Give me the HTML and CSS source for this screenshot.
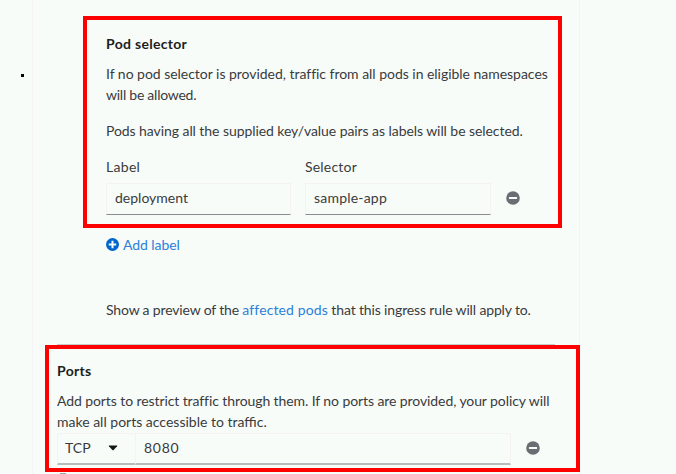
FILE: index.html
```html
<!DOCTYPE html>
<html lang="en">
<head>
<meta charset="utf-8">
<title>Ingress rule</title>
<link rel="stylesheet" href="styles.css">
</head>
<body>
<div class="page">
  <div class="gutter"><span class="bullet"></span></div>
  <main class="card">
    <section class="frame frame-pods">
      <h2><span class="wide">Pod selector</span></h2>
      <p class="intro"><span class="pod-help">If no pod selector is provided, traffic from all pods in eligible namespaces</span><br><span class="tighter">will be allowed.</span></p>
      <p class="pairs"><span class="tight">Pods having all the supplied key/value pairs as labels will be selected.</span></p>
      <div class="fields">
        <div class="field"><div class="name wide">Label</div><div class="input">deployment</div></div>
        <div class="field roomy"><div class="name">Selector</div><div class="input">sample-app</div></div>
        <svg class="minus" viewBox="0 0 14 14"><circle cx="7" cy="7" r="6.8"/><rect x="2.9" y="5.9" width="8.2" height="2.1" rx=".4"/></svg>
      </div>
    </section>
    <div class="add"><svg class="plus" viewBox="0 0 14 14"><circle cx="7" cy="7" r="7"/><path d="M5.9 3h2.2v2.9H11v2.2H8.1V11H5.9V8.1H3V5.9h2.9z"/></svg><span class="tight">Add label</span></div>
    <p class="preview"><span class="lead">Show a preview of the </span><a>affected pods</a><span class="tail"> that this ingress rule will apply to.</span></p>
    <div class="rule"></div>
    <section class="frame frame-ports">
      <h2><span class="wide">Ports</span></h2>
      <p class="port-text"><span class="port-help">Add ports to restrict traffic through them. If no ports are provided, your policy will</span><br>make all ports accessible to traffic.</p>
      <div class="port-row">
        <div class="select"><span>TCP</span><svg class="caret" viewBox="0 0 10 6"><path d="M1.2.5h7.6q.9 0 .3.8L5.6 4.9q-.6.5-1.2 0L.9 1.3Q.3.5 1.2.5z"/></svg></div>
        <div class="port">8080</div>
        <svg class="minus" viewBox="0 0 14 14"><circle cx="7" cy="7" r="6.8"/><rect x="2.9" y="5.9" width="8.2" height="2.1" rx=".4"/></svg>
      </div>
    </section>
    <div class="next"></div>
  </main>
</div>
</body>
</html>
```
FILE: styles.css
```css
* { box-sizing: border-box; }
body {
  margin: 0;
  background: #f8fcf9;
  color: #383b3d;
  font: 14px/21px Lato, "Liberation Sans", sans-serif;
}
h2, p { margin: 0; white-space: nowrap; }
h2 { font-size: 14px; line-height: 21px; font-weight: 700; color: #1c1e20; }
.wide { letter-spacing: .3px; }
.roomy { letter-spacing: .2px; }
.pod-help { letter-spacing: -.03px; }
.tight { letter-spacing: -.07px; }
.tighter { letter-spacing: -.25px; }
.page { display: flex; width: 676px; height: 474px; overflow: hidden; }
.gutter { width: 32px; padding: 74px 0 0 21px; }
.bullet { display: block; width: 3px; height: 3px; background: #000; }
.card {
  width: 548px;
  height: 474px;
  padding-top: 16px;
  border-left: 1px solid #f5f4f2;
  border-right: 1px solid #f5f4f2;
}
.frame { border: 4px solid #f00; }
.frame-pods { width: 479px; height: 212px; margin-left: 50px; padding: 13px 0 0 19px; }
.intro { margin-top: 9px; }
.pairs { margin-top: 15px; }
.fields { display: flex; gap: 14px; margin-top: 15px; }
.field { width: 185px; }
.field + .field { width: 186px; }
.input {
  height: 32px;
  margin-top: 6px;
  padding: 3px 8px;
  border: 1px solid #f4f3f1;
  border-bottom-color: #8a8d90;
}
.minus { width: 14px; height: 14px; fill: #6a6e73; }
.fields .minus { margin: 35px 0 0 1px; }
.minus rect, .plus path { fill: #f8fcf9; }
.add { display: flex; align-items: center; gap: 4px; margin: 6px 0 0 73px; color: #2b80d8; }
.plus { width: 13px; height: 13px; fill: #06c; }
.preview { margin: 44px 0 0 73px; }
.preview span { white-space: pre; }
.preview a { color: #2b80d8; letter-spacing: .12px; }
.preview .lead { letter-spacing: -.16px; }
.preview .tail { letter-spacing: -.14px; }
.rule { width: 498px; height: 1px; margin: 24px 0 0 24px; background: #c6cacb; }
.frame-ports { width: 535px; height: 127px; margin-left: 12px; padding: 11px 0 0 8px; }
.port-text { margin-top: 9px; }
.port-help { letter-spacing: -.09px; }
.port-row { display: flex; height: 32px; margin-top: 1px; }
.select, .port {
  height: 32px;
  padding: 3px 7px;
  border: 1px solid #f4f3f1;
  border-bottom: 2px solid #b8bbbe;
}
.select { display: flex; align-items: flex-start; justify-content: space-between; width: 78px; padding: 3px 17px 0 7px; border-right: 0; }
.port { width: 376px; padding-left: 8px; letter-spacing: .7px; }
.caret { width: 10px; height: 6px; margin-top: 8px; fill: #151515; }
.port-row .minus { margin: 8px 0 0 15px; }
.next { width: 6px; height: 1px; margin: 1px 0 0 27px; background: #9aa5ab; }
```
